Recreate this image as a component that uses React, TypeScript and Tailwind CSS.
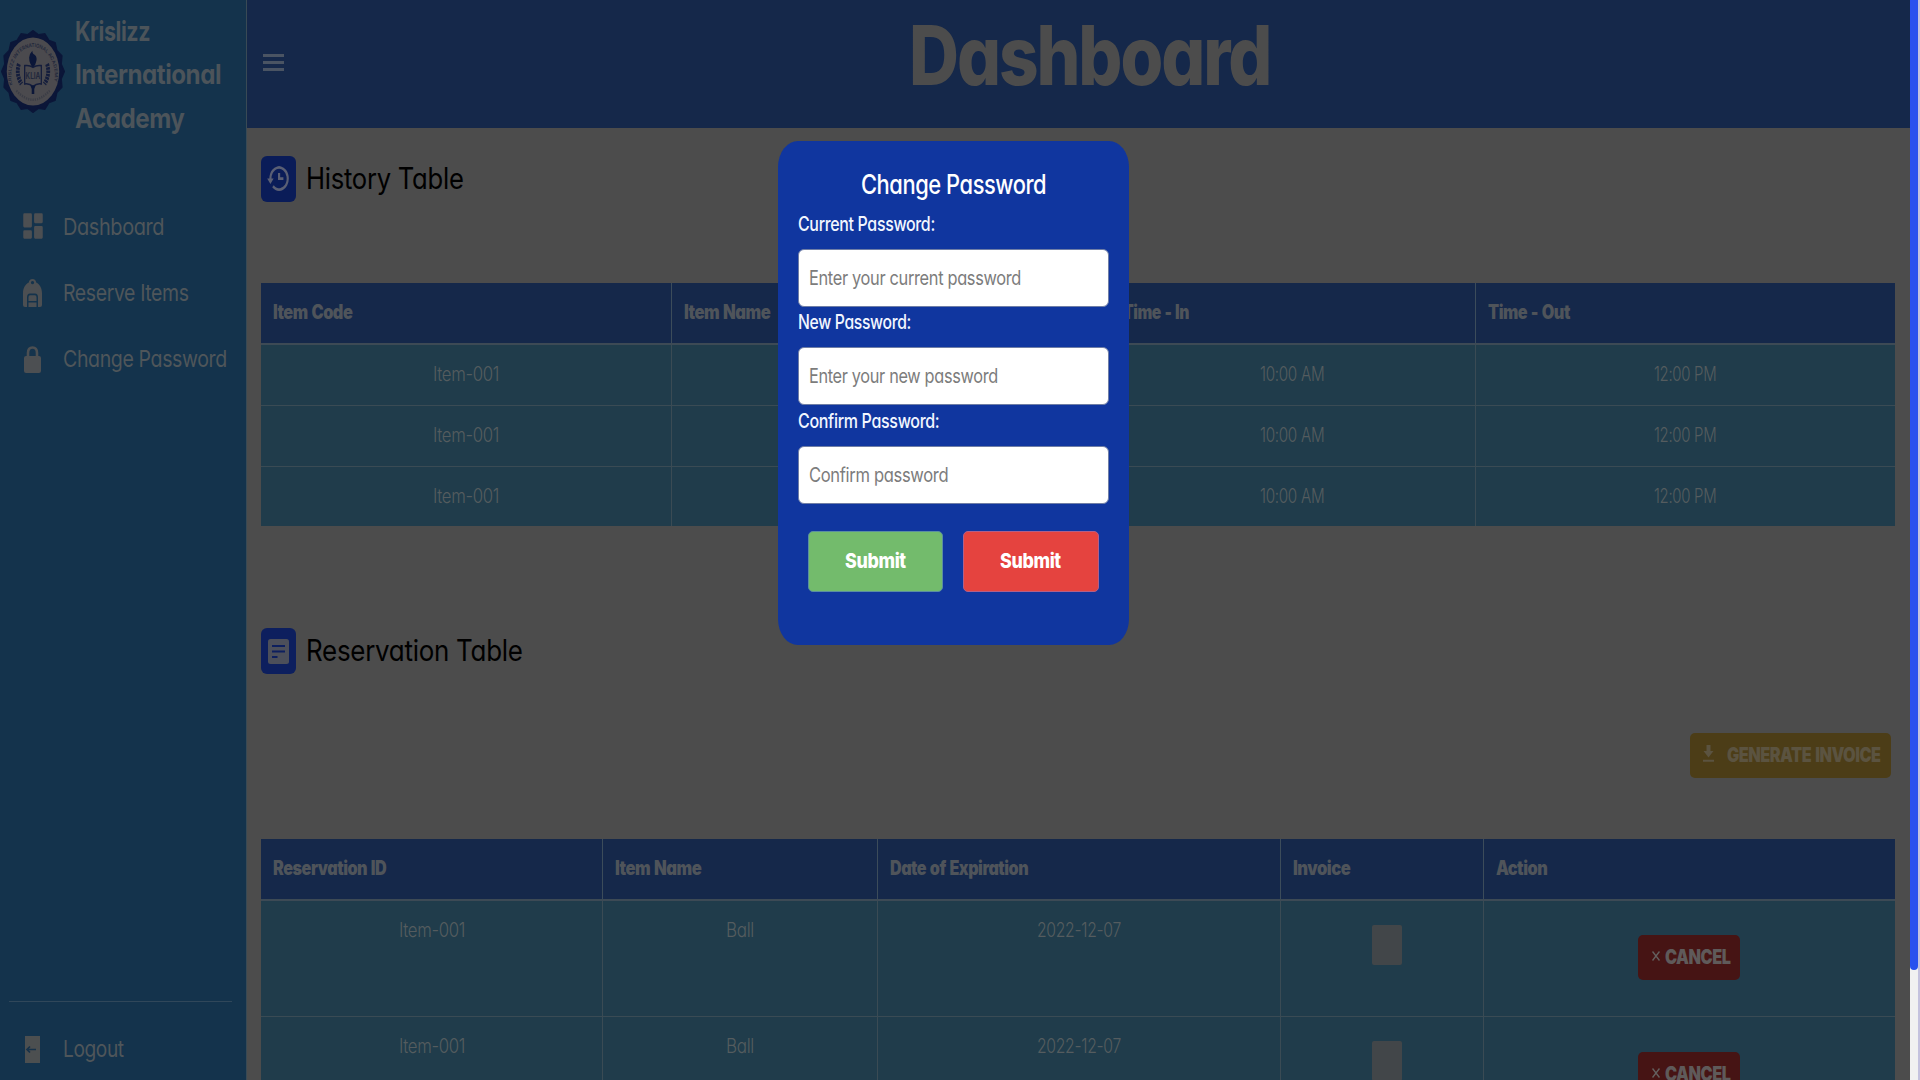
import React, { useLayoutEffect, useRef, useState } from "react";
import { BiHistory, BiSolidDashboard } from "react-icons/bi";

/* Condensed label: squeezes its text horizontally to the given width. */
function Fit({ w, className = "", children }: { w: number; className?: string; children: string }) {
  const ref = useRef<HTMLSpanElement>(null);
  const [scale, setScale] = useState(0.75);
  useLayoutEffect(() => {
    if (ref.current) setScale(w / ref.current.offsetWidth);
  }, [w, children]);
  return (
    <span className={"block shrink-0 " + className} style={{ width: w }}>
      <span
        ref={ref}
        className="inline-block origin-left whitespace-nowrap align-top"
        style={{ transform: `scaleX(${scale})` }}
      >
        {children}
      </span>
    </span>
  );
}

function Seal() {
  const points = Array.from({ length: 32 }, (_, i) => {
    const a = (i / 32) * Math.PI * 2;
    const r = i % 2 ? 45 : 49;
    return `${50 + r * Math.sin(a)},${50 - r * Math.cos(a)}`;
  }).join(" ");
  return (
    <svg viewBox="0 0 100 100" preserveAspectRatio="none" className="h-[83px] w-[64px] shrink-0">
      <defs>
        <path id="ring" d="M18 66 A34 34 0 1 1 82 66" />
      </defs>
      <polygon points={points} fill="#0b1638" stroke="#0b1638" strokeWidth="2" strokeLinejoin="round" />
      <circle cx="50" cy="50" r="41" fill="#4b4a4e" />
      <text fontSize="6.5" fontWeight="600" fill="#22283c">
        <textPath href="#ring" textLength="126" lengthAdjust="spacingAndGlyphs">KRISLIZZ INTERNATIONAL ACADEMY</textPath>
      </text>
      <path d="M24 73q26 22 52 0" fill="none" stroke="#3b3d46" strokeWidth="3" strokeDasharray="2 1.500" />
      <path d="M37 43q7-1 13 2 6-3 13-2v22q-7-1-13 3-6-4-13-3z" fill="#4b4a4e" stroke="#141d3c" strokeWidth="2" />
      <path d="M44 33q0-4 5-8 0 4 4 5 4 3 2 8-1 5-5 7-6-4-6-12z" fill="#0b1638" />
      <path d="M46 67h8l-2 4v6h-4v-6z" fill="#0b1638" />
      <path d="M28 41q-5 12 4 24M72 41q5 12-4 24" fill="none" stroke="#141d3c" strokeWidth="6" strokeDasharray="3 1" />
      <text x="50" y="59" fontSize="10" fontWeight="700" textAnchor="middle" fill="#22283c">KLIA</text>
    </svg>
  );
}

function BackpackIcon() {
  return (
    <svg viewBox="0 0 19 28" preserveAspectRatio="none" className="h-[28px] w-[19px]" fill="#4c4f52">
      <path
        fillRule="evenodd"
        d="M9.500 0c2.200 0 3.600 1.600 3.700 3.500C17 5.500 19 9.500 19 14v12q0 2-2 2h-2v-9.500q0-4-3-4h-5q-3 0-3 4V28H2q-2 0-2-2V14C0 9.500 2 5.500 5.800 3.500 5.900 1.600 7.300 0 9.500 0zm0 2a1.600 1.600 0 1 0 .01 0z"
      />
      <path d="M7 16.200h5q1.500 0 1.500 2V22h-8v-3.800q0-2 1.500-2zM5.500 23.500h8V28h-8z" />
    </svg>
  );
}

function LockIcon() {
  return (
    <svg viewBox="0 0 17 27" className="h-[27px] w-[17px]">
      <path d="M4 12V7q0-5.500 4.500-5.500T13 7v5" fill="none" stroke="#4c4f52" strokeWidth="2.600" />
      <rect y="10" width="17" height="17" rx="2" fill="#4c4f52" />
    </svg>
  );
}

function LogoutIcon() {
  return (
    <svg viewBox="0 0 15 27" className="h-[27px] w-[15px]">
      <path d="M0 0h15v27H0z" fill="#4c4f50" />
      <path d="M2 13.500h9M5 10.500l-3 3 3 3" fill="none" stroke="#17324a" strokeWidth="1.700" />
    </svg>
  );
}

function NoteIcon() {
  return (
    <svg viewBox="0 0 21 25" className="h-[25px] w-[21px]">
      <rect width="21" height="25" rx="2.500" fill="#4c4f5a" />
      <path d="M4 7h13M4 12.500h13M4 18h5.500" stroke="#0d1f5e" strokeWidth="1.900" />
    </svg>
  );
}

function DownloadIcon() {
  return (
    <svg viewBox="0 0 11 17" className="h-[17px] w-[11px]" fill="#5b5340">
      <path d="M3.500 0h4v6H10.500l-5 6.500L.5 6h3zM0 14.800h11v2H0z" />
    </svg>
  );
}

function CrossIcon() {
  return (
    <svg viewBox="0 0 8 10" className="h-[10px] w-[8px]">
      <path d="M.5.5l7 9M7.500.5l-7 9" stroke="#64605f" strokeWidth="1.400" />
    </svg>
  );
}

function NavItem({ icon, label, w }: { icon: React.ReactNode; label: string; w: number }) {
  return (
    <div className="flex h-[66px] items-center">
      <span className="flex w-[63px] justify-center pl-[2px] text-[#4c4f52]">{icon}</span>
      <Fit w={w} className="text-[23.5px] leading-[30px] tracking-[-0.02em] text-[#4f565a]">{label}</Fit>
    </div>
  );
}

function SectionTitle({ icon, label, w, color }: { icon: React.ReactNode; label: string; w: number; color: string }) {
  return (
    <div className="flex h-[46px] items-center">
      <span className={"flex h-[46px] w-[35px] items-center justify-center rounded-[6px] " + color}>{icon}</span>
      <Fit w={w} className="ml-[10px] mt-[-2px] text-[29.5px] leading-[44px] tracking-[-0.01em] text-black">{label}</Fit>
    </div>
  );
}

type Head = { label: string; w: number; col: string };

const historyHead: Head[] = [
  { label: "Item Code", w: 79.5, col: "w-[409.500px]" },
  { label: "Item Name", w: 86, col: "w-[439px]" },
  { label: "Time - In", w: 66, col: "w-[365px]" },
  { label: "Time - Out", w: 81.5, col: "w-[420px]" },
];

const reservationHead: Head[] = [
  { label: "Reservation ID", w: 113, col: "w-[341px]" },
  { label: "Item Name", w: 86, col: "w-[274.500px]" },
  { label: "Date of Expiration", w: 138, col: "w-[403.500px]" },
  { label: "Invoice", w: 57, col: "w-[202.500px]" },
  { label: "Action", w: 51, col: "w-[412px]" },
];

function HeadRow({ heads }: { heads: Head[] }) {
  return (
    <div className="flex h-[62px] border-b-[2.5px] border-[#3d4a55] bg-[#15284a]">
      {heads.map((h, i) => (
        <div key={h.label} className={"flex items-center pb-px pl-[12px] " + h.col + (i ? " border-l border-[#3c4c5a]" : "")}>
          <Fit w={h.w} className="text-[19.5px] font-black leading-[24px] tracking-[-0.03em] [word-spacing:0.06em] text-[#4f545a]">{h.label}</Fit>
        </div>
      ))}
    </div>
  );
}

function Cell({ col, first, children }: { col: string; first?: boolean; children?: React.ReactNode }) {
  return (
    <div className={"flex justify-center text-[19.5px] font-light leading-[24px] tracking-[-0.02em] text-[#555c5f] " + col + (first ? "" : " border-l border-[#3a4b54]")}>
      {children}
    </div>
  );
}

function CancelButton() {
  return (
    <button className="mt-[34.500px] flex h-[45px] w-[101.5px] items-center rounded-[5px] bg-[#461414] pl-[14px]">
      <span className="mb-[3px]"><CrossIcon /></span>
      <Fit w={65} className="ml-[5px] mt-[-1px] text-[20px] font-black leading-[24px] tracking-[-0.03em] text-[#5f5a5a]">CANCEL</Fit>
    </button>
  );
}

function Field({ label, lw, hint, hw, gap }: { label: string; lw: number; hint: string; hw: number; gap: string }) {
  return (
    <div className={gap}>
      <Fit w={lw} className="h-[24px] text-[20px] font-medium leading-[24px] tracking-[-0.02em] text-[#f2f6ff]">{label}</Fit>
      <div className="mt-[13px] flex h-[58px] w-[311px] items-center rounded-[6px] border border-[#6f7ea6] bg-white pl-[10px]">
        <Fit w={hw} className="text-[20px] leading-[26px] tracking-[-0.02em] text-[#7c7c7c]">{hint}</Fit>
      </div>
    </div>
  );
}

export default function App() {
  return (
    <div className="relative flex h-[1080px] w-[1920px] overflow-hidden bg-[#4c4c4c] font-['Inter',sans-serif] [font-feature-settings:'cv11']">
      <aside className="flex h-[1080px] w-[245.5px] shrink-0 flex-col bg-[#14334c]">
        <div className="flex h-[194px]">
          <div className="pl-[1px] pt-[30px]"><Seal /></div>
          <div className="ml-[10px] pt-[9.500px] text-[27.500px] font-bold leading-[43.500px] tracking-[-0.02em] text-[#4c545a]">
            <Fit w={75}>Krislizz</Fit>
            <Fit w={146}>International</Fit>
            <Fit w={109}>Academy</Fit>
          </div>
        </div>
        <NavItem icon={<BiSolidDashboard preserveAspectRatio="none" className="mb-[2px] h-[34px] w-[26px]" />} label="Dashboard" w={101} />
        <NavItem icon={<BackpackIcon />} label="Reserve Items" w={126} />
        <NavItem icon={<LockIcon />} label="Change Password" w={164} />
        <div className="mx-[9px] mt-auto mr-[14px] h-[1.500px] bg-[#30475a]" />
        <div className="mb-0 mt-[14px] h-[64px]">
          <NavItem icon={<LogoutIcon />} label="Logout" w={61} />
        </div>
      </aside>

      <main className="flex w-[1664px] shrink-0 flex-col border-l border-[#394a55]">
        <header className="flex h-[128px] shrink-0 bg-[#15284a]">
          <div className="mt-[53.500px] ml-[16.500px] flex h-[17px] w-[20.500px] flex-col justify-between">
            <span className="h-[3px] bg-[#4a5463]" />
            <span className="h-[3px] bg-[#4a5463]" />
            <span className="h-[3px] bg-[#4a5463]" />
          </div>
          <Fit w={361} className="ml-[625px] text-[82px] font-extrabold leading-[112px] tracking-[-0.03em] text-[#4c4c4c]">Dashboard</Fit>
        </header>

        <section className="pl-[14.5px] pt-[28px]">
          <SectionTitle
            color="bg-[#0a1c58]"
            label="History Table"
            w={158}
            icon={<BiHistory preserveAspectRatio="none" className="mb-[2px] mr-[2px] h-[33px] w-[26px] text-[#5a5f74]" />}
          />
          <div className="mt-[80.5px] w-[1633.5px]">
            <HeadRow heads={historyHead} />
            {[0, 1, 2].map((r) => (
              <div key={r} className={"flex bg-[#203c4b] " + (r < 2 ? "h-[61px] border-b-[1.5px] border-[#3a4b54]" : "h-[59.5px]")}>
                <Cell col="w-[409.500px] pt-[17px]" first><Fit w={66}>Item-001</Fit></Cell>
                <Cell col="w-[439px] pt-[17px]" />
                <Cell col="w-[365px] pt-[17px] pr-[2px]"><Fit w={64}>10:00 AM</Fit></Cell>
                <Cell col="w-[420px] pt-[17px]"><Fit w={62}>12:00 PM</Fit></Cell>
              </div>
            ))}
          </div>
        </section>

        <section className="pl-[14.5px] pt-[102px]">
          <SectionTitle color="bg-[#0d1f5e]" label="Reservation Table" w={217} icon={<NoteIcon />} />
          <div className="mt-[59px] flex w-[1629.5px] justify-end">
            <button className="flex h-[45px] w-[200.5px] items-center rounded-[5px] bg-[#4c3d17] pl-[13px]">
              <span className="mb-[4px]"><DownloadIcon /></span>
              <Fit w={153.5} className="ml-[12.500px] mt-[-1px] text-[20px] font-black leading-[24px] tracking-[-0.03em] [word-spacing:0.08em] text-[#5b5340]">GENERATE INVOICE</Fit>
            </button>
          </div>
          <div className="mt-[60.5px] w-[1633.5px]">
            <HeadRow heads={reservationHead} />
            {[0, 1].map((r) => (
              <div key={r} className="flex h-[116.5px] border-b-[1.5px] border-[#3a4b54] bg-[#203c4b]">
                <Cell col="w-[341px] pt-[17px]" first><Fit w={66}>Item-001</Fit></Cell>
                <Cell col="w-[274.500px] pt-[17px]"><Fit w={28}>Ball</Fit></Cell>
                <Cell col="w-[403.500px] pt-[17px]"><Fit w={84}>2022-12-07</Fit></Cell>
                <Cell col="w-[202.500px] pt-[24px] pl-[10px]"><span className="h-[40px] w-[30px] rounded-[2px] bg-[#424649]" /></Cell>
                <Cell col="w-[412px]"><CancelButton /></Cell>
              </div>
            ))}
          </div>
        </section>
      </main>

      <div className="h-[1080px] w-[8.5px] shrink-0 bg-[#f1f1f1]">
        <div className="h-[970px] rounded-b-[4px] bg-[#2850ee]" />
      </div>
      <div className="h-[1080px] w-[2px] bg-[#c4c2de]" />

      <div className="absolute left-[777.5px] top-[141px] h-[504px] w-[351px] rounded-[20px/26px] bg-[#10369f] pl-[20px] pt-[25.500px]">
        <Fit w={185} className="ml-[63px] h-[34px] text-[26.500px] font-medium leading-[34px] tracking-[-0.02em] text-white">Change Password</Fit>
        <Field gap="mt-[11.500px]" label="Current Password:" lw={137} hint="Enter your current password" hw={212} />
        <Field gap="mt-[3px]" label="New Password:" lw={113} hint="Enter your new password" hw={189} />
        <Field gap="mt-[4px]" label="Confirm Password:" lw={141} hint="Confirm password" hw={139} />
        <div className="mt-[26.500px] ml-[10px] flex gap-[20px]">
          <button className="flex h-[61px] w-[135.500px] items-center justify-center rounded-[5px] border border-[#5a8fa0] bg-[#73bb6c]">
            <Fit w={61} className="text-[20.500px] font-extrabold leading-[26px] tracking-[-0.02em] text-white">Submit</Fit>
          </button>
          <button className="flex h-[61px] w-[135.500px] items-center justify-center rounded-[5px] border border-[#b0608a] bg-[#e5433f]">
            <Fit w={61} className="text-[20.500px] font-extrabold leading-[26px] tracking-[-0.02em] text-white">Submit</Fit>
          </button>
        </div>
      </div>
    </div>
  );
}
